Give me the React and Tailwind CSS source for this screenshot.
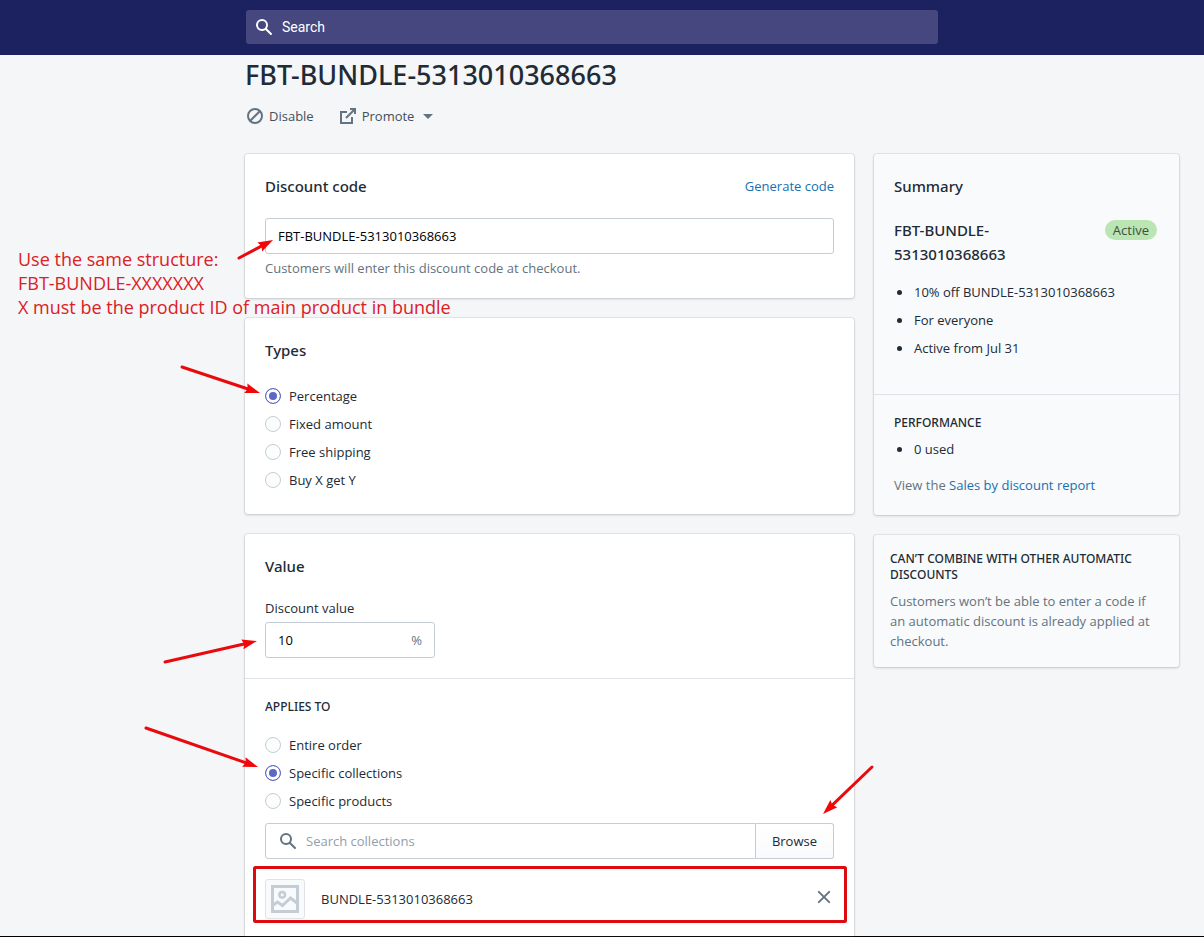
import React from "react";

const card =
  "rounded-[3px] shadow-[0_0_0_1px_rgba(63,63,68,0.08),0_1px_3px_0_rgba(63,63,68,0.2)]";
const sectionTitle = "font-['Noto_Sans',sans-serif] text-[15px] leading-6 font-medium text-[#212b36]";
const subTitle = "font-['Noto_Sans',sans-serif] text-[12px] leading-4 font-medium uppercase text-[#212b36]";
const fieldBox = "h-9 rounded-[3px] border border-[#c4cdd5] bg-white";

function SearchIcon({ className }) {
  return (
    <svg viewBox="0 0 20 20" className={className} fill="currentColor" aria-hidden="true">
      <path d="M8 12a4 4 0 1 1 0-8 4 4 0 0 1 0 8m9.707 4.293l-4.82-4.82A5.968 5.968 0 0 0 14 8 6 6 0 0 0 2 8a6 6 0 0 0 6 6 5.968 5.968 0 0 0 3.473-1.113l4.82 4.82a.997.997 0 0 0 1.414 0 .999.999 0 0 0 0-1.414" />
    </svg>
  );
}

function DisableIcon() {
  return (
    <svg viewBox="0 0 20 20" className="size-5 text-[#637381]" fill="none" stroke="currentColor" strokeWidth="2" aria-hidden="true">
      <circle cx="10" cy="10" r="7" />
      <path d="M5.2 14.8l9.6-9.6" />
    </svg>
  );
}

function ExternalIcon() {
  return (
    <svg viewBox="0 0 20 20" className="size-5 text-[#637381]" fill="none" stroke="currentColor" strokeWidth="2" aria-hidden="true">
      <path d="M9 6H3v11h11v-6" />
      <path d="M12 3h5v5M17 3l-9 9" />
    </svg>
  );
}

function ImageIcon() {
  return (
    <svg viewBox="0 0 28 28" className="size-7 text-[#c4cdd5]" fill="none" stroke="currentColor" strokeWidth="3" aria-hidden="true">
      <rect x="1.5" y="1.5" width="25" height="25" />
      <circle cx="11.2" cy="9.8" r="2.8" strokeWidth="2.6" />
      <path d="M1.5 20.5L6.5 17l5 3.5 8-7.5 7 5.5" />
    </svg>
  );
}

function CloseIcon() {
  return (
    <svg viewBox="0 0 20 20" className="size-5" fill="none" stroke="currentColor" strokeWidth="1.9" strokeLinecap="round" aria-hidden="true">
      <path d="M4.8 4.8l10.4 10.4M15.2 4.8L4.8 15.2" />
    </svg>
  );
}

function RadioList({ name, options, selected }) {
  return (
    <div className="flex flex-col">
      {options.map((option) => (
        <label key={option} className="flex h-7 items-center gap-2">
          <input
            type="radio"
            name={name}
            defaultChecked={option === selected}
            className="size-4 shrink-0 appearance-none rounded-full border border-[#c4cdd5] bg-[#fcfdfd] checked:border-[#5c6ac4] checked:bg-[#5c6ac4] checked:shadow-[inset_0_0_0_3px_#fff]"
          />
          {option}
        </label>
      ))}
    </div>
  );
}

function Bullets({ items }) {
  return (
    <ul className="flex flex-col gap-2">
      {items.map((item) => (
        <li key={item} className="flex items-center gap-3 pl-[3px]">
          <span className="size-[5px] rounded-full bg-[#212b36]" />
          {item}
        </li>
      ))}
    </ul>
  );
}

const arrows = [
  [239, 258, 273, 240],
  [182, 367, 260, 393],
  [165, 662, 257, 641],
  [146, 728, 258, 767],
  [872, 767, 823, 814],
];

function Annotations() {
  return (
    <div className="pointer-events-none absolute inset-0 overflow-hidden">
      <svg width="1204" height="937" className="absolute top-0 left-0" aria-hidden="true">
        {arrows.map(([x1, y1, x2, y2]) => {
          const length = Math.hypot(x2 - x1, y2 - y1);
          const angle = (Math.atan2(y2 - y1, x2 - x1) * 180) / Math.PI;
          return (
            <g key={x1} transform={`translate(${x2} ${y2}) rotate(${angle})`}>
              <path d={`M${-length} 0H-11`} stroke="#e90a0e" strokeWidth="3" strokeLinecap="round" />
              <path d="M0 0L-15 -5L-13 0L-15 5Z" fill="#f40508" />
            </g>
          );
        })}
        <rect x="254.5" y="867.5" width="591" height="54" rx="1" fill="none" stroke="#dd0a10" strokeWidth="3" />
      </svg>
      <p className="absolute top-[247px] left-[18px] text-[18px] leading-6 whitespace-nowrap text-[#dc2024]">
        Use the same structure:
        <br />
        FBT-BUNDLE-XXXXXXX
        <br />X must be the product ID of main product in bundle
      </p>
    </div>
  );
}

export default function App() {
  return (
    <div className="relative flex min-h-screen flex-col border-b border-black bg-[#f4f6f8] font-['Open_Sans',sans-serif] text-[13px] leading-5 text-[#212b36]">
      <header className="flex h-[55px] bg-[#1c2260] pt-[10px] pr-6 pl-[246px]">
        <label className="flex h-[34px] w-full max-w-[692px] items-center gap-2 rounded-[3px] bg-[#45477e] px-2 text-white">
          <SearchIcon className="size-5 shrink-0" />
          <input
            type="search"
            aria-label="Search"
            placeholder="Search"
            className="min-w-0 flex-1 bg-transparent font-['Roboto',sans-serif] text-[14px] outline-none placeholder:text-white"
          />
        </label>
      </header>

      <main className="flex flex-1 flex-col pr-[25px] pl-[245px]">
        <h1 className="font-['Noto_Sans',sans-serif] text-[27px] leading-10 font-medium">FBT-BUNDLE-5313010368663</h1>
        <div className="mt-[11px] flex gap-6 text-[#454f5b]">
          <button type="button" className="flex items-center gap-1">
            <DisableIcon />
            Disable
          </button>
          <button type="button" className="flex items-center gap-1">
            <ExternalIcon />
            Promote
            <svg viewBox="0 0 20 20" className="size-5 text-[#637381]" fill="currentColor" aria-hidden="true">
              <path d="M5 8l5 5 5-5z" />
            </svg>
          </button>
        </div>

        <div className="mt-7 grid flex-1 grid-cols-[minmax(0,1fr)_305px] gap-5">
          <div className="flex flex-col gap-5">
            <section className={`${card} bg-white p-5`}>
              <div className="flex items-center justify-between">
                <h2 className={sectionTitle}>Discount code</h2>
                <a href="#generate" className="text-[#1770b0]">Generate code</a>
              </div>
              <input
                aria-label="Discount code"
                aria-describedby="code-help"
                defaultValue="FBT-BUNDLE-5313010368663"
                className={`${fieldBox} mt-5 block w-full px-3 text-black`}
              />
              <p id="code-help" className="mt-1 text-[#637381]">
                Customers will enter this discount code at checkout.
              </p>
            </section>

            <section className={`${card} bg-white p-5`}>
              <h2 className={`${sectionTitle} mb-5`}>Types</h2>
              <RadioList
                name="type"
                options={["Percentage", "Fixed amount", "Free shipping", "Buy X get Y"]}
                selected="Percentage"
              />
            </section>

            <section className={`${card} flex-1 rounded-b-none bg-white`}>
              <div className="p-5">
                <h2 className={sectionTitle}>Value</h2>
                <label htmlFor="discount-value" className="mt-5 mb-1 block">
                  Discount value
                </label>
                <div className={`${fieldBox} flex w-[170px] items-center px-3`}>
                  <input
                    id="discount-value"
                    defaultValue="10"
                    className="min-w-0 flex-1 bg-transparent text-black outline-none"
                  />
                  <span className="text-[#637381]">%</span>
                </div>
              </div>
              <div className="border-t border-[#dfe3e8] px-5 pt-5">
                <h3 className={`${subTitle} mb-4`}>Applies to</h3>
                <RadioList
                  name="applies"
                  options={["Entire order", "Specific collections", "Specific products"]}
                  selected="Specific collections"
                />
                <div className="mt-2 flex">
                  <label className={`${fieldBox} flex min-w-0 flex-1 items-center gap-2 rounded-r-none px-3 text-[#637381]`}>
                    <SearchIcon className="size-5 shrink-0" />
                    <input
                      type="search"
                      aria-label="Search collections"
                      placeholder="Search collections"
                      className="min-w-0 flex-1 bg-transparent outline-none placeholder:text-[#919eab]"
                    />
                  </label>
                  <button
                    type="button"
                    className="h-9 rounded-r-[3px] border border-l-0 border-[#c4cdd5] bg-linear-to-b from-white to-[#f9fafb] px-4"
                  >
                    Browse
                  </button>
                </div>
                <div className="mt-5 flex items-center gap-4">
                  <div className="flex size-10 items-center justify-center rounded-[3px] border border-[#dfe3e8] bg-[#f9fafb]">
                    <ImageIcon />
                  </div>
                  <span className="flex-1">BUNDLE-5313010368663</span>
                  <button type="button" aria-label="Remove" className="mb-1 text-[#637381]">
                    <CloseIcon />
                  </button>
                </div>
              </div>
            </section>
          </div>

          <aside className="flex flex-col gap-5">
            <section className={`${card} bg-[#f9fafb]`}>
              <div className="px-5 pt-5 pb-9">
                <h2 className={`${sectionTitle} mb-5`}>Summary</h2>
                <div className="mb-4 flex items-start justify-between">
                  <p className={sectionTitle}>
                    FBT-BUNDLE-
                    <br />
                    5313010368663
                  </p>
                  <span className="mt-[2px] mr-[2px] rounded-full bg-[#bbe5b3] px-2 text-[#414f3e]">
                    Active
                  </span>
                </div>
                <Bullets items={["10% off BUNDLE-5313010368663", "For everyone", "Active from Jul 31"]} />
              </div>
              <div className="border-t border-[#dfe3e8] p-5">
                <h3 className={`${subTitle} mb-2`}>Performance</h3>
                <Bullets items={["0 used"]} />
                <p className="mt-4 text-[#637381]">
                  View the{" "}
                  <a href="#report" className="text-[#1770b0]">Sales by discount report</a>
                </p>
              </div>
            </section>

            <section className={`${card} bg-[#f9fafb] p-4`}>
              <h3 className={`${subTitle} mb-2`}>Can’t combine with other automatic discounts</h3>
              <p className="text-[#637381]">
                Customers won’t be able to enter a code if an automatic discount is already applied at checkout.
              </p>
            </section>
          </aside>
        </div>
      </main>
      <Annotations />
    </div>
  );
}
